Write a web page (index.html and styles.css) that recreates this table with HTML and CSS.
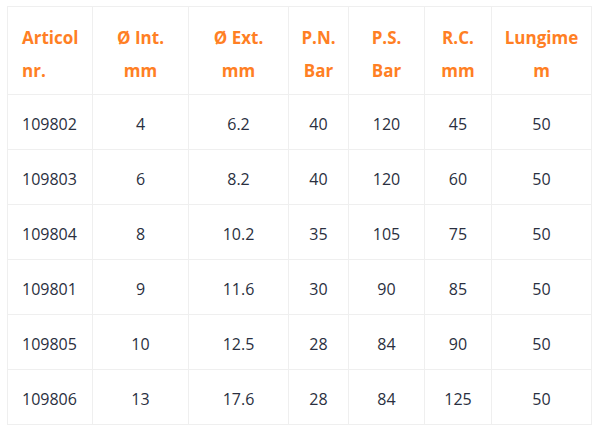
FILE: index.html
```html
<!DOCTYPE html>
<html>
<head>
<meta charset="utf-8">
<link rel="stylesheet" href="styles.css">
</head>
<body>
<div class="wrap">
<table class="spec">
  <colgroup>
    <col class="c1"><col class="c2"><col class="c3"><col class="c4"><col class="c5"><col class="c6"><col class="c7">
  </colgroup>
  <thead>
    <tr>
      <th class="first">Articol<br>nr.</th>
      <th>Ø Int.<br>mm</th>
      <th>Ø Ext.<br>mm</th>
      <th>P.N.<br>Bar</th>
      <th>P.S.<br>Bar</th>
      <th>R.C.<br>mm</th>
      <th>Lungime<br>m</th>
    </tr>
  </thead>
  <tbody>
    <tr><td class="first">109802</td><td>4</td><td>6.2</td><td>40</td><td>120</td><td>45</td><td>50</td></tr>
    <tr><td class="first">109803</td><td>6</td><td>8.2</td><td>40</td><td>120</td><td>60</td><td>50</td></tr>
    <tr><td class="first">109804</td><td>8</td><td>10.2</td><td>35</td><td>105</td><td>75</td><td>50</td></tr>
    <tr><td class="first">109801</td><td>9</td><td>11.6</td><td>30</td><td>90</td><td>85</td><td>50</td></tr>
    <tr><td class="first">109805</td><td>10</td><td>12.5</td><td>28</td><td>84</td><td>90</td><td>50</td></tr>
    <tr><td class="first">109806</td><td>13</td><td>17.6</td><td>28</td><td>84</td><td>125</td><td>50</td></tr>
  </tbody>
</table>
</div>
</body>
</html>
```
FILE: styles.css
```css
html, body {
  margin: 0;
  padding: 0;
  background: #ffffff;
}
.wrap {
  padding: 6px 0 0 7px;
}
.spec {
  border-collapse: collapse;
  table-layout: fixed;
  width: 584px;
  font-family: "Open Sans", "DejaVu Sans", sans-serif;
  font-size: 16px;
  color: #2a2f40;
}
.c1 { width: 85px; }
.c2 { width: 96px; }
.c3 { width: 100px; }
.c4 { width: 60px; }
.c5 { width: 76px; }
.c6 { width: 67px; }
.c7 { width: 100px; }
.spec th, .spec td {
  border: 1px solid #efefef;
  text-align: center;
  vertical-align: middle;
  padding: 0;
}
.spec th {
  color: #ff7f24;
  font-size: 17px;
  font-weight: 700;
  line-height: 33px;
  height: 81px;
  padding-top: 6px;
}
.spec td {
  font-weight: 500;
  line-height: 32px;
  height: 51px;
  padding-top: 3px;
}
.spec .first {
  text-align: left;
  padding-left: 14px;
}
```
